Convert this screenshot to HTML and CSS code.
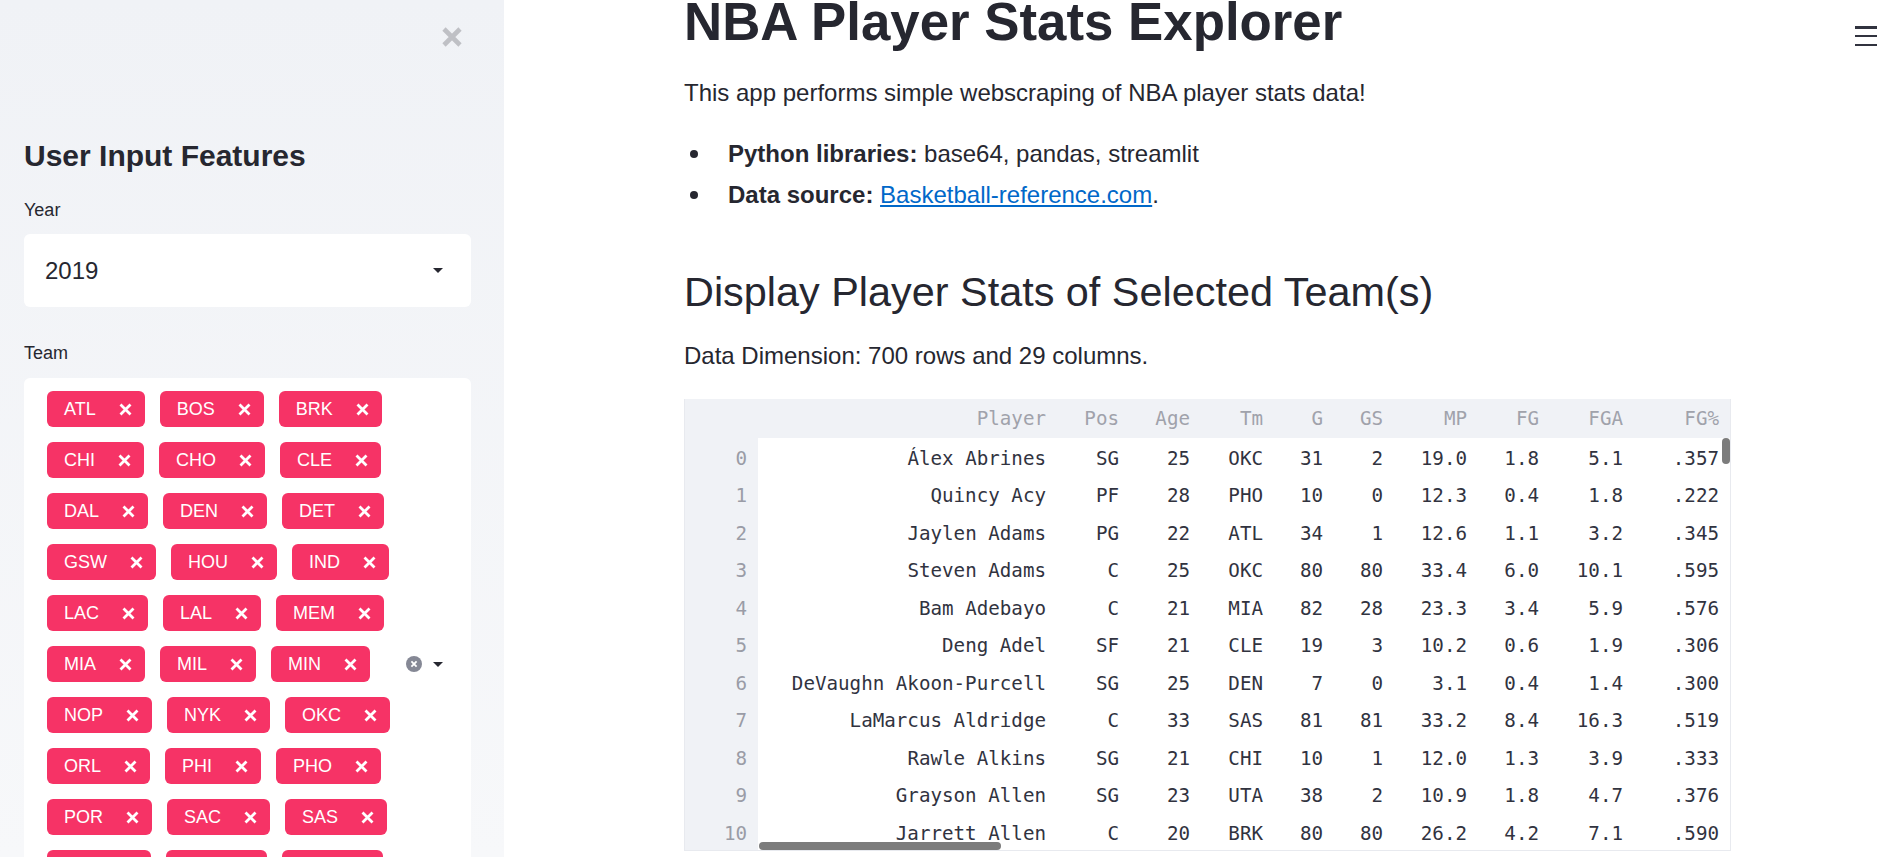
FILE: index.html
```html
<!DOCTYPE html>
<html lang="en">
<head>
<meta charset="utf-8">
<title>NBA Player Stats Explorer</title>
<link rel="stylesheet" href="styles.css">
</head>
<body>
<aside class="sidebar">
  <div class="close-row">
    <button class="close-btn" aria-label="Close sidebar">
      <svg width="22" height="22" viewBox="0 0 22 22"><path d="M3 3 L19 19 M19 3 L3 19" stroke="#bfc0c5" stroke-width="4.6" fill="none"/></svg>
    </button>
  </div>
  <h2 class="side-title">User Input Features</h2>
  <label class="field-label">Year</label>
  <div class="select">
    <span class="select-value">2019</span>
    <svg class="caret" width="10" height="5" viewBox="0 0 10 5"><path d="M0 0 H10 L5 5 Z" fill="#262730"/></svg>
  </div>
  <label class="field-label team-label">Team</label>
  <div class="multiselect">
    <div class="tags">
      <span class="tag">ATL<svg viewBox="0 0 13 13"><path d="M1.5 1.5 L11.5 11.5 M11.5 1.5 L1.5 11.5"/></svg></span>
      <span class="tag">BOS<svg viewBox="0 0 13 13"><path d="M1.5 1.5 L11.5 11.5 M11.5 1.5 L1.5 11.5"/></svg></span>
      <span class="tag">BRK<svg viewBox="0 0 13 13"><path d="M1.5 1.5 L11.5 11.5 M11.5 1.5 L1.5 11.5"/></svg></span>
      <span class="tag">CHI<svg viewBox="0 0 13 13"><path d="M1.5 1.5 L11.5 11.5 M11.5 1.5 L1.5 11.5"/></svg></span>
      <span class="tag">CHO<svg viewBox="0 0 13 13"><path d="M1.5 1.5 L11.5 11.5 M11.5 1.5 L1.5 11.5"/></svg></span>
      <span class="tag">CLE<svg viewBox="0 0 13 13"><path d="M1.5 1.5 L11.5 11.5 M11.5 1.5 L1.5 11.5"/></svg></span>
      <span class="tag">DAL<svg viewBox="0 0 13 13"><path d="M1.5 1.5 L11.5 11.5 M11.5 1.5 L1.5 11.5"/></svg></span>
      <span class="tag">DEN<svg viewBox="0 0 13 13"><path d="M1.5 1.5 L11.5 11.5 M11.5 1.5 L1.5 11.5"/></svg></span>
      <span class="tag">DET<svg viewBox="0 0 13 13"><path d="M1.5 1.5 L11.5 11.5 M11.5 1.5 L1.5 11.5"/></svg></span>
      <span class="tag">GSW<svg viewBox="0 0 13 13"><path d="M1.5 1.5 L11.5 11.5 M11.5 1.5 L1.5 11.5"/></svg></span>
      <span class="tag">HOU<svg viewBox="0 0 13 13"><path d="M1.5 1.5 L11.5 11.5 M11.5 1.5 L1.5 11.5"/></svg></span>
      <span class="tag">IND<svg viewBox="0 0 13 13"><path d="M1.5 1.5 L11.5 11.5 M11.5 1.5 L1.5 11.5"/></svg></span>
      <span class="tag">LAC<svg viewBox="0 0 13 13"><path d="M1.5 1.5 L11.5 11.5 M11.5 1.5 L1.5 11.5"/></svg></span>
      <span class="tag">LAL<svg viewBox="0 0 13 13"><path d="M1.5 1.5 L11.5 11.5 M11.5 1.5 L1.5 11.5"/></svg></span>
      <span class="tag">MEM<svg viewBox="0 0 13 13"><path d="M1.5 1.5 L11.5 11.5 M11.5 1.5 L1.5 11.5"/></svg></span>
      <span class="tag">MIA<svg viewBox="0 0 13 13"><path d="M1.5 1.5 L11.5 11.5 M11.5 1.5 L1.5 11.5"/></svg></span>
      <span class="tag">MIL<svg viewBox="0 0 13 13"><path d="M1.5 1.5 L11.5 11.5 M11.5 1.5 L1.5 11.5"/></svg></span>
      <span class="tag">MIN<svg viewBox="0 0 13 13"><path d="M1.5 1.5 L11.5 11.5 M11.5 1.5 L1.5 11.5"/></svg></span>
      <span class="tag">NOP<svg viewBox="0 0 13 13"><path d="M1.5 1.5 L11.5 11.5 M11.5 1.5 L1.5 11.5"/></svg></span>
      <span class="tag">NYK<svg viewBox="0 0 13 13"><path d="M1.5 1.5 L11.5 11.5 M11.5 1.5 L1.5 11.5"/></svg></span>
      <span class="tag">OKC<svg viewBox="0 0 13 13"><path d="M1.5 1.5 L11.5 11.5 M11.5 1.5 L1.5 11.5"/></svg></span>
      <span class="tag">ORL<svg viewBox="0 0 13 13"><path d="M1.5 1.5 L11.5 11.5 M11.5 1.5 L1.5 11.5"/></svg></span>
      <span class="tag">PHI<svg viewBox="0 0 13 13"><path d="M1.5 1.5 L11.5 11.5 M11.5 1.5 L1.5 11.5"/></svg></span>
      <span class="tag">PHO<svg viewBox="0 0 13 13"><path d="M1.5 1.5 L11.5 11.5 M11.5 1.5 L1.5 11.5"/></svg></span>
      <span class="tag">POR<svg viewBox="0 0 13 13"><path d="M1.5 1.5 L11.5 11.5 M11.5 1.5 L1.5 11.5"/></svg></span>
      <span class="tag">SAC<svg viewBox="0 0 13 13"><path d="M1.5 1.5 L11.5 11.5 M11.5 1.5 L1.5 11.5"/></svg></span>
      <span class="tag">SAS<svg viewBox="0 0 13 13"><path d="M1.5 1.5 L11.5 11.5 M11.5 1.5 L1.5 11.5"/></svg></span>
      <span class="tag">TOR<svg viewBox="0 0 13 13"><path d="M1.5 1.5 L11.5 11.5 M11.5 1.5 L1.5 11.5"/></svg></span>
      <span class="tag">TOT<svg viewBox="0 0 13 13"><path d="M1.5 1.5 L11.5 11.5 M11.5 1.5 L1.5 11.5"/></svg></span>
      <span class="tag">UTA<svg viewBox="0 0 13 13"><path d="M1.5 1.5 L11.5 11.5 M11.5 1.5 L1.5 11.5"/></svg></span>
      <span class="tag">WAS<svg viewBox="0 0 13 13"><path d="M1.5 1.5 L11.5 11.5 M11.5 1.5 L1.5 11.5"/></svg></span>
    </div>
    <div class="ms-icons">
      <svg width="16" height="16" viewBox="0 0 16 16"><circle cx="8" cy="8" r="8" fill="#858895"/><path d="M5.4 5.4 L10.6 10.6 M10.6 5.4 L5.4 10.6" stroke="#fff" stroke-width="1.8"/></svg>
      <svg class="caret" width="10" height="5" viewBox="0 0 10 5"><path d="M0 0 H10 L5 5 Z" fill="#262730"/></svg>
    </div>
  </div>
</aside>

<main class="main">
  <div class="block">
    <h1 class="title">NBA Player Stats Explorer</h1>
    <p class="text intro">This app performs simple webscraping of NBA player stats data!</p>
    <ul class="bullets">
      <li><span><strong>Python libraries:</strong> base64, pandas, streamlit</span></li>
      <li><span><strong>Data source:</strong> <a href="#">Basketball-reference.com</a>.</span></li>
    </ul>
    <h2 class="subtitle">Display Player Stats of Selected Team(s)</h2>
    <p class="text dims">Data Dimension: 700 rows and 29 columns.</p>

    <div class="frame">
      <table class="df">
        <colgroup>
          <col class="c-idx"><col class="c-player"><col class="c-pos"><col class="c-age"><col class="c-tm"><col class="c-g"><col class="c-gs"><col class="c-mp"><col class="c-fg"><col class="c-fga"><col class="c-fgp">
        </colgroup>
        <thead>
          <tr><th></th><th>Player</th><th>Pos</th><th>Age</th><th>Tm</th><th>G</th><th>GS</th><th>MP</th><th>FG</th><th>FGA</th><th>FG%</th></tr>
        </thead>
        <tbody>
          <tr><th>0</th><td>Álex Abrines</td><td>SG</td><td>25</td><td>OKC</td><td>31</td><td>2</td><td>19.0</td><td>1.8</td><td>5.1</td><td>.357</td></tr>
          <tr><th>1</th><td>Quincy Acy</td><td>PF</td><td>28</td><td>PHO</td><td>10</td><td>0</td><td>12.3</td><td>0.4</td><td>1.8</td><td>.222</td></tr>
          <tr><th>2</th><td>Jaylen Adams</td><td>PG</td><td>22</td><td>ATL</td><td>34</td><td>1</td><td>12.6</td><td>1.1</td><td>3.2</td><td>.345</td></tr>
          <tr><th>3</th><td>Steven Adams</td><td>C</td><td>25</td><td>OKC</td><td>80</td><td>80</td><td>33.4</td><td>6.0</td><td>10.1</td><td>.595</td></tr>
          <tr><th>4</th><td>Bam Adebayo</td><td>C</td><td>21</td><td>MIA</td><td>82</td><td>28</td><td>23.3</td><td>3.4</td><td>5.9</td><td>.576</td></tr>
          <tr><th>5</th><td>Deng Adel</td><td>SF</td><td>21</td><td>CLE</td><td>19</td><td>3</td><td>10.2</td><td>0.6</td><td>1.9</td><td>.306</td></tr>
          <tr><th>6</th><td>DeVaughn Akoon-Purcell</td><td>SG</td><td>25</td><td>DEN</td><td>7</td><td>0</td><td>3.1</td><td>0.4</td><td>1.4</td><td>.300</td></tr>
          <tr><th>7</th><td>LaMarcus Aldridge</td><td>C</td><td>33</td><td>SAS</td><td>81</td><td>81</td><td>33.2</td><td>8.4</td><td>16.3</td><td>.519</td></tr>
          <tr><th>8</th><td>Rawle Alkins</td><td>SG</td><td>21</td><td>CHI</td><td>10</td><td>1</td><td>12.0</td><td>1.3</td><td>3.9</td><td>.333</td></tr>
          <tr><th>9</th><td>Grayson Allen</td><td>SG</td><td>23</td><td>UTA</td><td>38</td><td>2</td><td>10.9</td><td>1.8</td><td>4.7</td><td>.376</td></tr>
          <tr><th>10</th><td>Jarrett Allen</td><td>C</td><td>20</td><td>BRK</td><td>80</td><td>80</td><td>26.2</td><td>4.2</td><td>7.1</td><td>.590</td></tr>
        </tbody>
      </table>
      <div class="thumb-h"></div>
      <div class="thumb-v"></div>
    </div>
  </div>
  <button class="menu-btn" aria-label="Menu"><span></span><span></span><span></span></button>
</main>
</body>
</html>
```

FILE: styles.css
```css
* { box-sizing: border-box; }

html, body {
  margin: 0;
  height: 100%;
}

body {
  display: flex;
  height: 857px;
  overflow: hidden;
  font-family: "Liberation Sans", Arial, sans-serif;
  color: #262730;
  background: #ffffff;
}

/* ---------- Sidebar ---------- */
.sidebar {
  flex: 0 0 504px;
  width: 504px;
  height: 857px;
  overflow: hidden;
  background: linear-gradient(180deg, #f0f2f6 0%, #f7f8fa 100%);
  padding: 0 33px 0 24px;
}

.close-row {
  display: flex;
  justify-content: flex-end;
  margin-top: 26px;
  padding-right: 8px;
}

.close-btn {
  width: 22px;
  height: 22px;
  padding: 0;
  border: 0;
  background: none;
  display: block;
}
.close-btn svg { display: block; }

.side-title {
  margin: 89.6px 0 0;
  font-size: 30px;
  line-height: 36px;
  font-weight: 700;
  color: #262730;
}

.field-label {
  display: block;
  margin-top: 23.6px;
  font-size: 18px;
  line-height: 27px;
  color: #262730;
}

.team-label { margin-top: 32.8px; }

.select {
  margin-top: 9.8px;
  height: 73.5px;
  background: #ffffff;
  border-radius: 6px;
  display: flex;
  align-items: center;
  justify-content: space-between;
  padding: 0 28px 0 21px;
}

.select-value {
  font-size: 24px;
  color: #262730;
}

.caret { display: block; }

.multiselect {
  margin-top: 10.8px;
  background: #ffffff;
  border-radius: 6px;
  display: flex;
  padding: 13px 0 13px 23px;
}

.tags {
  flex: 1;
  display: flex;
  flex-wrap: wrap;
  gap: 15px;
  align-content: flex-start;
}

.tag {
  display: inline-flex;
  align-items: center;
  height: 36px;
  padding: 0 13px 0 17px;
  background: #f63366;
  color: #ffffff;
  border-radius: 6px;
  font-size: 18px;
}

.tag svg {
  width: 13px;
  height: 13px;
  margin-left: 23px;
  fill: none;
  stroke: #ffffff;
  stroke-width: 2.8;
}

.ms-icons {
  display: flex;
  align-items: center;
  gap: 11px;
  padding: 0 28px 0 8px;
}

/* ---------- Main ---------- */
.main {
  flex: 1;
  position: relative;
  display: flex;
  justify-content: center;
  padding-left: 9px;
  height: 857px;
  overflow: hidden;
}

.block {
  width: 1047px;
}

.title {
  margin: 0;
  font-size: 52.8px;
  line-height: 44px;
  font-weight: 700;
  color: #262730;
  white-space: nowrap;
}

.text {
  margin: 0;
  font-size: 24px;
  line-height: 38.4px;
}

.intro { margin-top: 30.2px; }

.bullets {
  list-style: none;
  margin: 21.4px 0 0;
  padding: 0;
  font-size: 24px;
  line-height: 40.8px;
}

.bullets li {
  display: flex;
  align-items: center;
}

.bullets li::before {
  content: "";
  flex: 0 0 8px;
  width: 8px;
  height: 8px;
  border-radius: 50%;
  background: #262730;
  margin: 0 30px 0 6px;
}

.bullets strong { font-weight: 700; }

.bullets a {
  color: #0068c9;
  text-decoration: underline;
}

.subtitle {
  margin: 52.2px 0 0;
  font-size: 41.4px;
  line-height: 49.7px;
  font-weight: 400;
  color: #262730;
}

.dims { margin-top: 19.3px; }

/* ---------- Dataframe ---------- */
.frame {
  position: relative;
  margin-top: 23.8px;
  border: 1px solid #e8eaef;
  border-top: 0;
  height: 452px;
  overflow: hidden;
  background: #ffffff;
}

.df {
  table-layout: fixed;
  border-collapse: collapse;
  width: 1045px;
  font-family: "DejaVu Sans Mono", "Liberation Mono", monospace;
  font-size: 19.2px;
}

.c-idx { width: 73px; }
.c-player { width: 299px; }
.c-pos { width: 73px; }
.c-age { width: 71px; }
.c-tm { width: 73px; }
.c-g { width: 60px; }
.c-gs { width: 60px; }
.c-mp { width: 84px; }
.c-fg { width: 72px; }
.c-fga { width: 84px; }
.c-fgp { width: 96px; }

.df th, .df td {
  padding: 0 11px 0 0;
  text-align: right;
  white-space: nowrap;
  font-weight: 400;
  overflow: hidden;
}

.df thead th {
  height: 39px;
  background: #f0f2f6;
  color: #a0a2ab;
  padding-top: 1px;
}

.df tbody tr { height: 37.5px; }

.df tbody th {
  background: #f0f2f6;
  color: #9a9ca6;
  padding-top: 3px;
}

.df tbody td {
  color: #31333f;
  padding-top: 3px;
}

.thumb-h {
  position: absolute;
  left: 74px;
  top: 443px;
  width: 242px;
  height: 8px;
  border-radius: 4px;
  background: #7c7c7c;
}

.thumb-v {
  position: absolute;
  left: 1037px;
  top: 39px;
  width: 8px;
  height: 26px;
  border-radius: 4px;
  background: #7c7c7c;
}

.menu-btn {
  position: absolute;
  top: 26px;
  right: 25px;
  width: 22px;
  height: 20px;
  padding: 0;
  border: 0;
  background: none;
  display: flex;
  flex-direction: column;
  justify-content: space-between;
}

.menu-btn span {
  display: block;
  width: 22px;
  height: 2.5px;
  background: #31333f;
}
```
